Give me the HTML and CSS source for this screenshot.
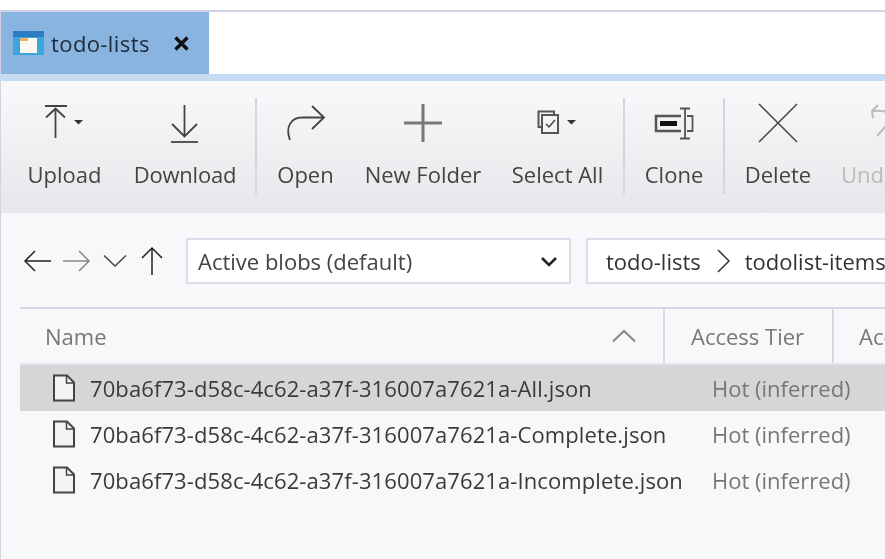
FILE: index.html
```html
<!DOCTYPE html>
<html lang="en">
<head>
<meta charset="utf-8">
<title>todo-lists</title>
<link rel="stylesheet" href="styles.css">
</head>
<body>
<div class="app">
  <div class="tabbar">
    <div class="tab">
      <svg class="tab-icon" width="31" height="24" viewBox="0 0 31 24"><rect width="31" height="24" fill="#3aa6dc"/><rect width="31" height="6" fill="#2b7cc4"/><rect x="7" y="7" width="17" height="15" fill="#fbf8ee"/><rect x="7" y="7" width="8" height="3" fill="#f2ae5c"/></svg>
      <span class="tab-title">todo-lists</span>
      <svg class="tab-close" width="17" height="17" viewBox="0 0 17 17"><path d="M2.5 2.5L14.5 14.5M14.5 2.5L2.5 14.5" stroke="#111" stroke-width="3.4" fill="none"/></svg>
    </div>
  </div>
  <div class="stripe"></div>
  <div class="toolbar">
    <div class="tool w-upload">
      <div class="tool-icon"><svg width="50" height="36" viewBox="0 0 50 36"><path d="M5 1H27M15.500 33V4M6 12.500L15.500 3.500L25 12.500" class="ico"/><path d="M34 15h9l-4.500 4.500z" fill="#333"/></svg></div>
      <span>Upload</span>
    </div>
    <div class="tool w-download">
      <div class="tool-icon"><svg width="30" height="40" viewBox="0 0 30 40"><path d="M14.500 2V33.500M2 21L14.500 33.500L27 21" class="ico"/><path d="M1 39H28" class="ico"/></svg></div>
      <span>Download</span>
    </div>
    <div class="sep"></div>
    <div class="tool w-open">
      <div class="tool-icon"><svg width="40" height="36" viewBox="0 0 40 36"><path d="M4 35C-1 22 5 12.500 16 12.500H37M26 1L38 12.500L26 24" class="ico"/></svg></div>
      <span>Open</span>
    </div>
    <div class="tool w-new">
      <div class="tool-icon"><svg width="40" height="40" viewBox="0 0 40 40"><path d="M20 1V39M1 20H39" fill="none" stroke="#777" stroke-width="3"/></svg></div>
      <span>New Folder</span>
    </div>
    <div class="tool w-select">
      <div class="tool-icon"><svg width="42" height="26" viewBox="0 0 42 26"><path d="M5 17H1.500V1.500H17V5" fill="none" stroke="#555" stroke-width="2"/><rect x="5" y="5" width="16" height="18" fill="none" stroke="#555" stroke-width="2"/><path d="M9 14L12 17L18 10" fill="none" stroke="#444" stroke-width="1.500"/><path d="M30 10h9l-4.500 4.500z" fill="#333"/></svg></div>
      <span>Select All</span>
    </div>
    <div class="sep"></div>
    <div class="tool w-clone">
      <div class="tool-icon"><svg width="40" height="34" viewBox="0 0 40 34"><path d="M27 10H2V25H27" fill="none" stroke="#555" stroke-width="2.500"/><rect x="6" y="15" width="17" height="5" fill="#111"/><path d="M33 10H38.500V25H33M26 2.500H36M31 2.500V32.500M26 32.500H36" fill="none" stroke="#555" stroke-width="1.800"/></svg></div>
      <span>Clone</span>
    </div>
    <div class="sep"></div>
    <div class="tool w-delete">
      <div class="tool-icon"><svg width="40" height="40" viewBox="0 0 40 40"><path d="M1 1L39 39M39 1L1 39" fill="none" stroke="#444" stroke-width="1.500"/></svg></div>
      <span>Delete</span>
    </div>
    <div class="tool w-undo disabled">
      <div class="tool-icon undo-icon"><svg width="40" height="40" viewBox="0 0 40 40"><path d="M9 2L3 8L4 15M3 8C14 7 24 9 25 14L8 33" fill="none" stroke="#bbb" stroke-width="2"/></svg></div>
      <span>Undo</span>
    </div>
  </div>
  <div class="content">
    <div class="navrow">
      <div class="navbtns">
        <svg width="28" height="24" viewBox="0 0 28 24"><path d="M28 12H2M12 2L2 12L12 22" fill="none" stroke="#222" stroke-width="1.500"/></svg>
        <svg width="28" height="24" viewBox="0 0 28 24"><path d="M0 12H26M16 2L26 12L16 22" fill="none" stroke="#888" stroke-width="1.500"/></svg>
        <svg width="24" height="14" viewBox="0 0 24 14"><path d="M1 1.500L12 12L23 1.500" fill="none" stroke="#444" stroke-width="1.500"/></svg>
        <svg width="24" height="30" viewBox="0 0 24 30"><path d="M13 29V2M3 12L13 2L23 12" fill="none" stroke="#222" stroke-width="1.500"/></svg>
      </div>
      <div class="select">
        <span>Active blobs (default)</span>
        <svg width="18" height="11" viewBox="0 0 18 11"><path d="M2 2L9 9L16 2" fill="none" stroke="#222" stroke-width="2.600"/></svg>
      </div>
      <div class="crumbs">
        <span>todo-lists</span>
        <svg width="14" height="24" viewBox="0 0 14 24"><path d="M2 1L13 12L2 23" fill="none" stroke="#333" stroke-width="1.500"/></svg>
        <span>todolist-items</span>
      </div>
    </div>
    <div class="table">
      <div class="thead">
        <div class="th th-name"><span>Name</span><svg width="24" height="14" viewBox="0 0 24 14"><path d="M1 12.500L12 2L23 12.500" fill="none" stroke="#888" stroke-width="2"/></svg></div>
        <div class="th th-tier">Access Tier</div>
        <div class="th th-next">Access Tier Last Modified</div>
      </div>
      <div class="row selected">
        <div class="cell-name"><svg class="file" width="24" height="28" viewBox="0 0 24 28"><path d="M2 1.500H15L22 8.500V26.500H2Z" fill="#f3f3f6" stroke="#444" stroke-width="2"/><path d="M14.500 1.500V9H22" fill="none" stroke="#444" stroke-width="1.500"/></svg><span>70ba6f73-d58c-4c62-a37f-316007a7621a-All.json</span></div>
        <div class="cell-tier">Hot (inferred)</div>
        <div class="cell-next">7/24/2019</div>
      </div>
      <div class="row">
        <div class="cell-name"><svg class="file" width="24" height="28" viewBox="0 0 24 28"><path d="M2 1.500H15L22 8.500V26.500H2Z" fill="#f3f3f6" stroke="#444" stroke-width="2"/><path d="M14.500 1.500V9H22" fill="none" stroke="#444" stroke-width="1.500"/></svg><span>70ba6f73-d58c-4c62-a37f-316007a7621a-Complete.json</span></div>
        <div class="cell-tier">Hot (inferred)</div>
        <div class="cell-next">7/24/2019</div>
      </div>
      <div class="row">
        <div class="cell-name"><svg class="file" width="24" height="28" viewBox="0 0 24 28"><path d="M2 1.500H15L22 8.500V26.500H2Z" fill="#f3f3f6" stroke="#444" stroke-width="2"/><path d="M14.500 1.500V9H22" fill="none" stroke="#444" stroke-width="1.500"/></svg><span>70ba6f73-d58c-4c62-a37f-316007a7621a-Incomplete.json</span></div>
        <div class="cell-tier">Hot (inferred)</div>
        <div class="cell-next">7/24/2019</div>
      </div>
    </div>
  </div>
</div>
</body>
</html>
```
FILE: styles.css
```css
html, body { margin: 0; padding: 0; }
body { width: 885px; height: 559px; overflow: hidden; background: #fff; font-family: "Open Sans", "Noto Sans", sans-serif; font-size: 22px; color: #333; }
.app { width: 885px; height: 559px; padding-top: 10px; box-sizing: border-box; display: flex; flex-direction: column; overflow: hidden; filter: blur(0.4px); }
.tabbar { height: 62px; border-top: 2px solid #d2d2e2; border-left: 1px solid #d2d2e2; background: #fff; display: flex; flex: none; }
.tab { width: 208px; background: #8ab4e0; display: flex; align-items: center; padding-left: 12px; box-sizing: border-box; }
.tab-icon { flex: none; }
.tab-title { margin-left: 7px; color: #1f2a3a; letter-spacing: 0.4px; }
.tab-close { margin-left: 23px; flex: none; }
.stripe { height: 7px; background: #c7dcf3; flex: none; }
.toolbar { height: 132px; flex: none; display: flex; align-items: stretch; background: linear-gradient(#f9f9fb, #e7e7eb); border-left: 1px solid #d2d2e2; box-sizing: border-box; padding-left: 8px; color: #444; }
.tool { display: flex; flex-direction: column; align-items: center; flex: none; white-space: nowrap; }
.tool-icon { height: 62px; margin-top: 11px; display: flex; align-items: center; justify-content: center; }
.undo-icon { margin-left: 40px; }
.tool span { line-height: 30px; margin-top: 5px; }
.ico { fill: none; stroke: #444; stroke-width: 1.800; }
.sep { width: 2px; height: 96px; margin-top: 17px; background: #d4d4e2; flex: none; }
.w-upload { width: 111px; }
.w-download { width: 130px; margin-right: 5px; }
.w-download span { letter-spacing: -0.2px; }
.w-open { width: 97px; }
.w-new { width: 138px; }
.w-select { width: 131px; }
.w-clone { width: 98px; }
.w-delete { width: 106px; }
.w-undo { width: 76px; }
.disabled { color: #bbb; }
.content { flex: 1; background: #f6f8f9; border-left: 1px solid #d2d2e2; padding: 25px 0 0 19px; overflow: hidden; }
.navrow { display: flex; align-items: center; height: 46px; white-space: nowrap; }
.navbtns { width: 166px; display: flex; align-items: center; gap: 12px; padding-left: 3px; box-sizing: border-box; flex: none; }
.select { width: 385px; height: 46px; box-sizing: border-box; border: 2px solid #dcdcea; background: #fff; display: flex; align-items: center; justify-content: space-between; padding: 0 11px 0 10px; flex: none; color: #444; }
.crumbs { margin-left: 15px; width: 320px; height: 46px; box-sizing: border-box; border: 2px solid #dcdcea; border-right: 0; background: #fff; display: flex; align-items: center; gap: 15px; padding-left: 18px; flex: none; color: #333; }
.table { margin-top: 23px; white-space: nowrap; }
.thead { display: flex; height: 54px; border-top: 2px solid #d6d6e4; border-bottom: 2px solid #e4e4ec; color: #777; }
.th { display: flex; align-items: center; height: 54px; box-sizing: border-box; flex: none; border-right: 2px solid #d6d6e4; }
.th-name { width: 645px; padding: 0 27px 0 25px; justify-content: space-between; }
.th-tier { width: 169px; padding-left: 26px; }
.th-next { padding-left: 25px; border-right: 0; }
.row { display: flex; align-items: center; height: 46px; }
.row.selected { background: #d6d6d8; }
.cell-name { width: 692px; flex: none; display: flex; align-items: center; padding-left: 32px; box-sizing: border-box; color: #3a3a3a; letter-spacing: 0.1px; }
.file { flex: none; margin-right: 14px; }
.cell-tier { width: 175px; flex: none; color: #777; }
.cell-next { color: #333; }
```
